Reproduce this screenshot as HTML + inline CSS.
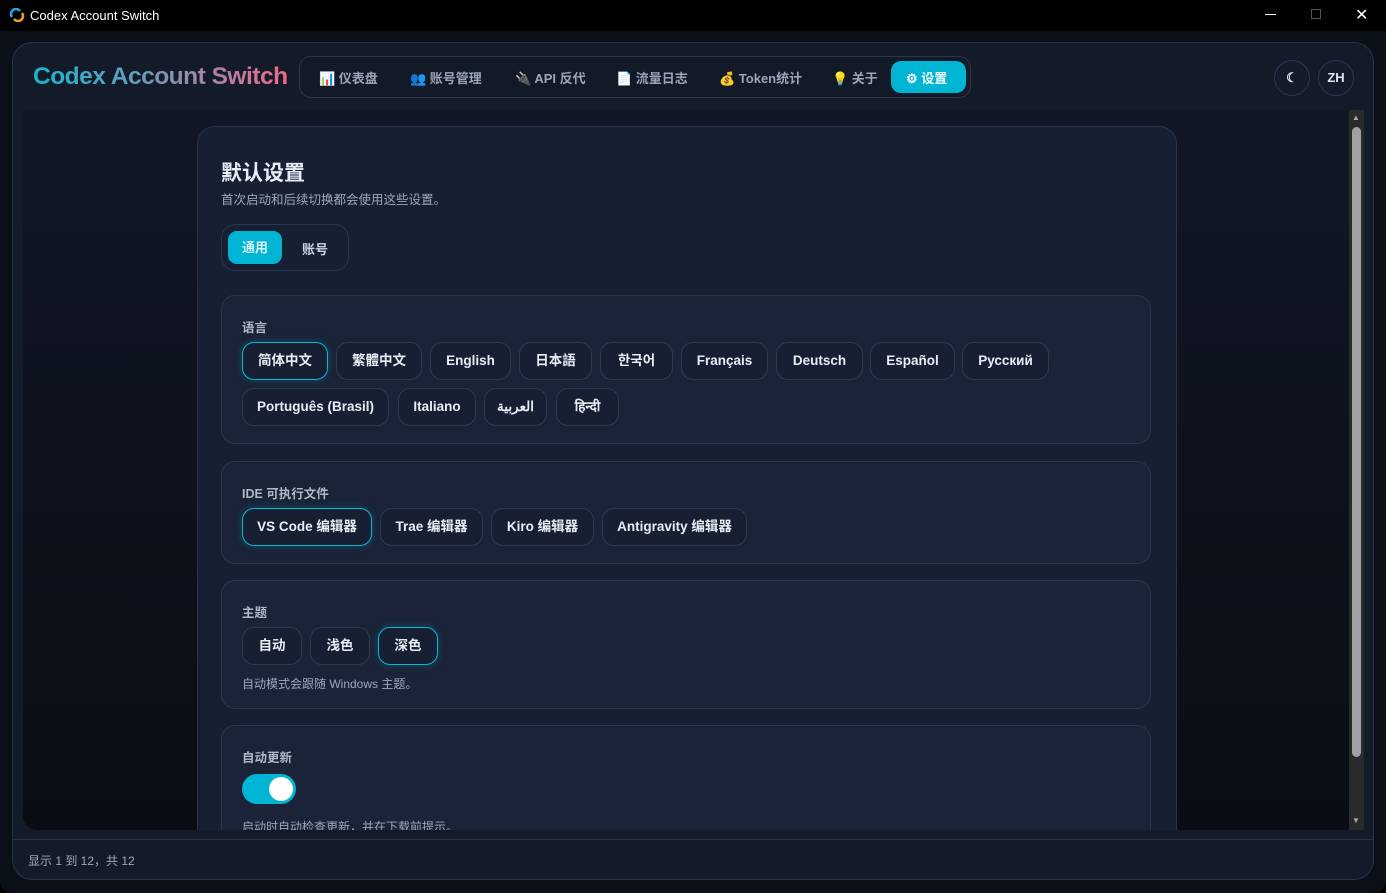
<!DOCTYPE html>
<html><head><meta charset="utf-8"><style>
*{box-sizing:border-box;margin:0;padding:0}
body{width:1386px;height:893px;overflow:hidden;background:#000;font-family:"Liberation Sans","Noto Sans CJK SC",sans-serif;color:#e6ecf5;position:relative}
.win{position:absolute;left:0;top:0;width:1386px;height:893px;border-radius:12px;background:#0b0f17;overflow:hidden}
.tb{position:absolute;left:0;top:0;width:1386px;height:31px;background:#000;color:#fff;font-size:13px}
.tb .t{position:absolute;left:30px;top:8px}
.app{position:absolute;left:12px;top:42px;width:1362px;height:838px;border-radius:20px;background:#131a28;border:1px solid #26324a}
.logo{position:absolute;left:20px;top:20px;font-size:24.5px;font-weight:bold;letter-spacing:-0.5px;background:linear-gradient(90deg,#17b6cf,#6f9ab8 45%,#f06a8c);-webkit-background-clip:text;color:transparent}
.nav{position:absolute;left:286px;top:13px;width:672px;height:42px;border:1px solid #2a3650;border-radius:12px;background:#121a28}
.nav span{position:absolute;top:11px;font-size:13px;font-weight:bold;color:#9aa6b8}
.nav .act{top:4px;height:32px;width:75px;padding:7px 0 0 15px;background:#00b4d4;color:#fff;border-radius:10px}
.rb{position:absolute;top:17px;width:36px;height:36px;border-radius:50%;border:1px solid #2a3650;background:#141c2b;font-size:13px;font-weight:bold;text-align:center;line-height:34px;color:#dfe6f0}
.content{position:absolute;left:10px;top:67px;width:1327px;height:720px;background:linear-gradient(180deg,#111725,#0a0d14);border-radius:0 0 0 14px;overflow:hidden}
.sb{position:absolute;left:1336px;top:67px;width:15px;height:720px;background:#2a2a2a}
.sb .th{position:absolute;left:3px;top:17px;width:9px;height:630px;background:#a0a0a0;border-radius:5px}
.card{position:absolute;left:174px;top:16px;width:980px;height:720px;background:#172033;border:1px solid #28344c;border-radius:18px}
h1{position:absolute;left:23px;top:30px;font-size:21px;font-weight:bold;color:#e8edf5}
.sub{position:absolute;left:23px;top:62px;font-size:12.5px;color:#9aa8bb}
.seg{position:absolute;left:23px;top:97px;width:128px;height:47px;border:1px solid #2a3650;border-radius:14px}
.seg .a{position:absolute;left:6px;top:6px;width:54px;height:33px;background:#00b4d4;border-radius:9px;color:#d6f4fa;font-size:13px;font-weight:bold;text-align:center;line-height:33px}
.seg .b{position:absolute;left:80px;top:14px;font-size:13px;font-weight:bold;color:#cdd5e2}
.sec{position:absolute;left:23px;width:930px;background:#1a2337;border:1px solid #2a3650;border-radius:14px}
.lbl{position:absolute;left:20px;top:21px;font-size:12.5px;font-weight:bold;color:#aeb9c9}
.btn{position:absolute;height:38px;border:1px solid #2d3a54;border-radius:12px;font-size:13.5px;font-weight:bold;color:#e8edf5;text-align:center;line-height:35px;background:#172033}
.btn.on{border-color:#0bb6d2;box-shadow:0 0 8px rgba(0,180,212,.3)}
.hint{position:absolute;left:20px;font-size:12px;color:#9aa8bb}
.foot{position:absolute;left:0;top:796px;width:1360px;border-top:1px solid #27324a;height:40px}
.foot span{position:absolute;left:15px;top:12px;font-size:12px;color:#9aa8bb}
</style></head><body><div class="win">
<div class="tb"><svg style="position:absolute;left:9px;top:8px" width="16" height="14" viewBox="0 0 16 14"><path d="M3 9a5 5 0 0 1 8-6" stroke="#2aa7e0" stroke-width="2.5" fill="none"/><path d="M13 5a5 5 0 0 1-8 6" stroke="#f0a020" stroke-width="2.5" fill="none"/></svg><span class="t">Codex Account Switch</span>
<span style="position:absolute;left:1265px;top:14px;width:11px;height:1px;background:#fff"></span>
<span style="position:absolute;left:1311px;top:9px;width:10px;height:10px;border:1px solid #555"></span>
<span style="position:absolute;left:1355px;top:5px;font-size:16px">✕</span></div>
<div class="app">
<div class="logo">Codex Account Switch</div>
<div class="nav">
<span style="left:19px">📊 仪表盘</span><span style="left:110px">👥 账号管理</span><span style="left:215px">🔌 API 反代</span><span style="left:316px">📄 流量日志</span><span style="left:419px">💰 Token统计</span><span style="left:532px">💡 关于</span><span class="act" style="left:591px">⚙ 设置</span></div>
<div class="rb" style="left:1261px">☾</div><div class="rb" style="left:1305px">ZH</div>
<div class="content">
<div class="card">
<h1>默认设置</h1><div class="sub">首次启动和后续切换都会使用这些设置。</div>
<div class="seg"><div class="a">通用</div><div class="b">账号</div></div>
<div class="sec" style="top:168px;height:149px"><div class="lbl">语言</div>
<div class="btn on" style="left:20px;top:46px;width:86px">简体中文</div>
<div class="btn" style="left:114px;top:46px;width:86px">繁體中文</div>
<div class="btn" style="left:208px;top:46px;width:81px">English</div>
<div class="btn" style="left:297px;top:46px;width:73px">日本語</div>
<div class="btn" style="left:378px;top:46px;width:73px">한국어</div>
<div class="btn" style="left:459px;top:46px;width:87px">Français</div>
<div class="btn" style="left:554px;top:46px;width:87px">Deutsch</div>
<div class="btn" style="left:648px;top:46px;width:85px">Español</div>
<div class="btn" style="left:740px;top:46px;width:87px">Русский</div>
<div class="btn" style="left:20px;top:92px;width:147px">Português (Brasil)</div>
<div class="btn" style="left:176px;top:92px;width:78px">Italiano</div>
<div class="btn" style="left:262px;top:92px;width:63px">العربية</div>
<div class="btn" style="left:334px;top:92px;width:63px">हिन्दी</div></div>
<div class="sec" style="top:334px;height:103px"><div class="lbl">IDE 可执行文件</div>
<div class="btn on" style="left:20px;top:46px;width:130px">VS Code 编辑器</div>
<div class="btn" style="left:158px;top:46px;width:103px">Trae 编辑器</div>
<div class="btn" style="left:269px;top:46px;width:103px">Kiro 编辑器</div>
<div class="btn" style="left:380px;top:46px;width:145px">Antigravity 编辑器</div></div>
<div class="sec" style="top:453px;height:129px"><div class="lbl">主题</div>
<div class="btn" style="left:20px;top:46px;width:60px">自动</div>
<div class="btn" style="left:88px;top:46px;width:60px">浅色</div>
<div class="btn on" style="left:156px;top:46px;width:60px">深色</div>
<div class="hint" style="top:94px">自动模式会跟随 Windows 主题。</div></div>
<div class="sec" style="top:598px;height:140px"><div class="lbl">自动更新</div>
<div style="position:absolute;left:20px;top:48px;width:54px;height:30px;border-radius:15px;background:#00b4d4"><div style="position:absolute;right:3px;top:3px;width:24px;height:24px;border-radius:50%;background:#fff"></div></div>
<div class="hint" style="top:92px">启动时自动检查更新，并在下载前提示。</div></div>
</div></div>
<div class="sb"><div class="th"></div><span style="position:absolute;left:3px;top:3px;font-size:8px;color:#aaa">▲</span><span style="position:absolute;left:3px;top:706px;font-size:8px;color:#aaa">▼</span></div>
<div class="foot"><span>显示 1 到 12，共 12</span></div>
</div></div></body></html>
